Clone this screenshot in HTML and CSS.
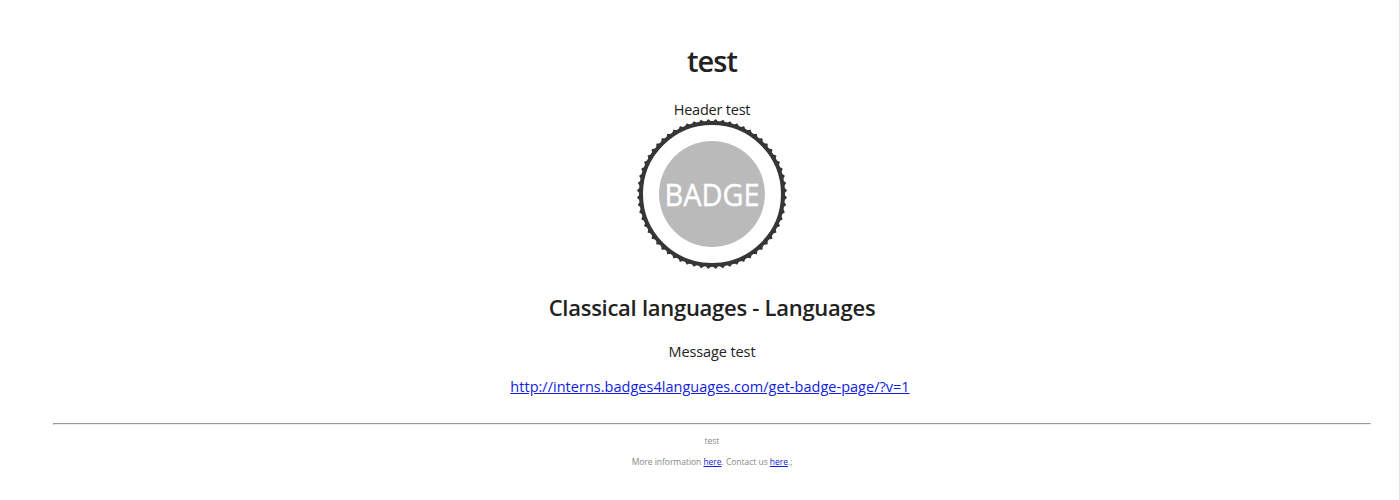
FILE: index.html
```
<!DOCTYPE html>
<html lang="en">
<head>
<meta charset="utf-8">
<title>test</title>
<link rel="stylesheet" href="styles.css">
</head>
<body>
<main class="page">
<h1 class="title">test</h1>
<p class="header-text">Header test</p>
<svg class="badge" viewBox="0 0 150 150" role="img" aria-label="Badge">
<defs>
<rect id="s" x="-53.2" y="-53.2" width="106.4" height="106.4" rx="0.8"/>
<g id="quad"><use href="#s"/><use href="#s" transform="rotate(5.625)"/><use href="#s" transform="rotate(11.25)"/><use href="#s" transform="rotate(16.875)"/></g>
</defs>
<g class="badge-teeth" transform="translate(75 75) rotate(2.8125)">
<use href="#quad"/><use href="#quad" transform="rotate(22.5)"/><use href="#quad" transform="rotate(45)"/><use href="#quad" transform="rotate(67.5)"/>
</g>
<circle class="badge-ring" cx="75" cy="75" r="71"/>
<circle class="badge-core" cx="75" cy="75" r="53"/>
<text class="badge-text" x="75" y="86.5" textLength="95" lengthAdjust="spacingAndGlyphs">BADGE</text>
</svg>
<h2 class="subtitle">Classical languages - Languages</h2>
<p class="message">Message test</p>
<p class="link-row"><a href="#">http://interns.badges4languages.com/get-badge-page/?v=1</a></p>
<hr class="rule">
<footer class="footer">
<p class="foot-name">test</p>
<p class="foot-more">More information <a href="#">here</a>. Contact us <a href="#">here</a>.;</p>
</footer>
</main>
</body>
</html>
```
FILE: styles.css
```
body { margin: 0; background: #fff; color: #222; font-family: "Open Sans", "Noto Sans", sans-serif; }
.page { height: 500px; box-sizing: border-box; padding: 40px 28px 0 53px; border-right: 1px solid #e2e2e2; text-align: center; overflow: hidden; }
.title { margin: 0; font-size: 29px; line-height: 42px; font-weight: 600; letter-spacing: -0.9px; }
.header-text { margin: 18px 0 0; font-size: 14.5px; line-height: 20px; letter-spacing: -0.22px; }
.badge { display: block; width: 150px; height: 150px; margin: -1px auto 0; overflow: visible; }
.badge-teeth { fill: #363636; }
.badge-ring { fill: #fff; stroke: #363636; stroke-width: 4; }
.badge-core { fill: #bababa; }
.badge-text { fill: #fff; stroke: #fff; stroke-width: 0.4; font-size: 30.5px; text-anchor: middle; }
.subtitle { margin: 22px 0 0; font-size: 22px; line-height: 32px; font-weight: 600; letter-spacing: -0.27px; }
.message { margin: 19px 0 0; font-size: 14.5px; line-height: 20px; letter-spacing: -0.1px; }
.link-row { margin: 15px 4px 0 0; font-size: 14.5px; line-height: 20px; letter-spacing: 0.02px; }
a { color: #1122dd; }
.rule { margin: 26px 0 0; border: 1px solid; border-color: #999 #eee #eee #999; }
.footer { font-size: 8.5px; color: #888; letter-spacing: -0.03px; }
.foot-name { margin: 10px 0 0; line-height: 12px; }
.foot-more { margin: 9px 0 0; line-height: 12px; }
```
